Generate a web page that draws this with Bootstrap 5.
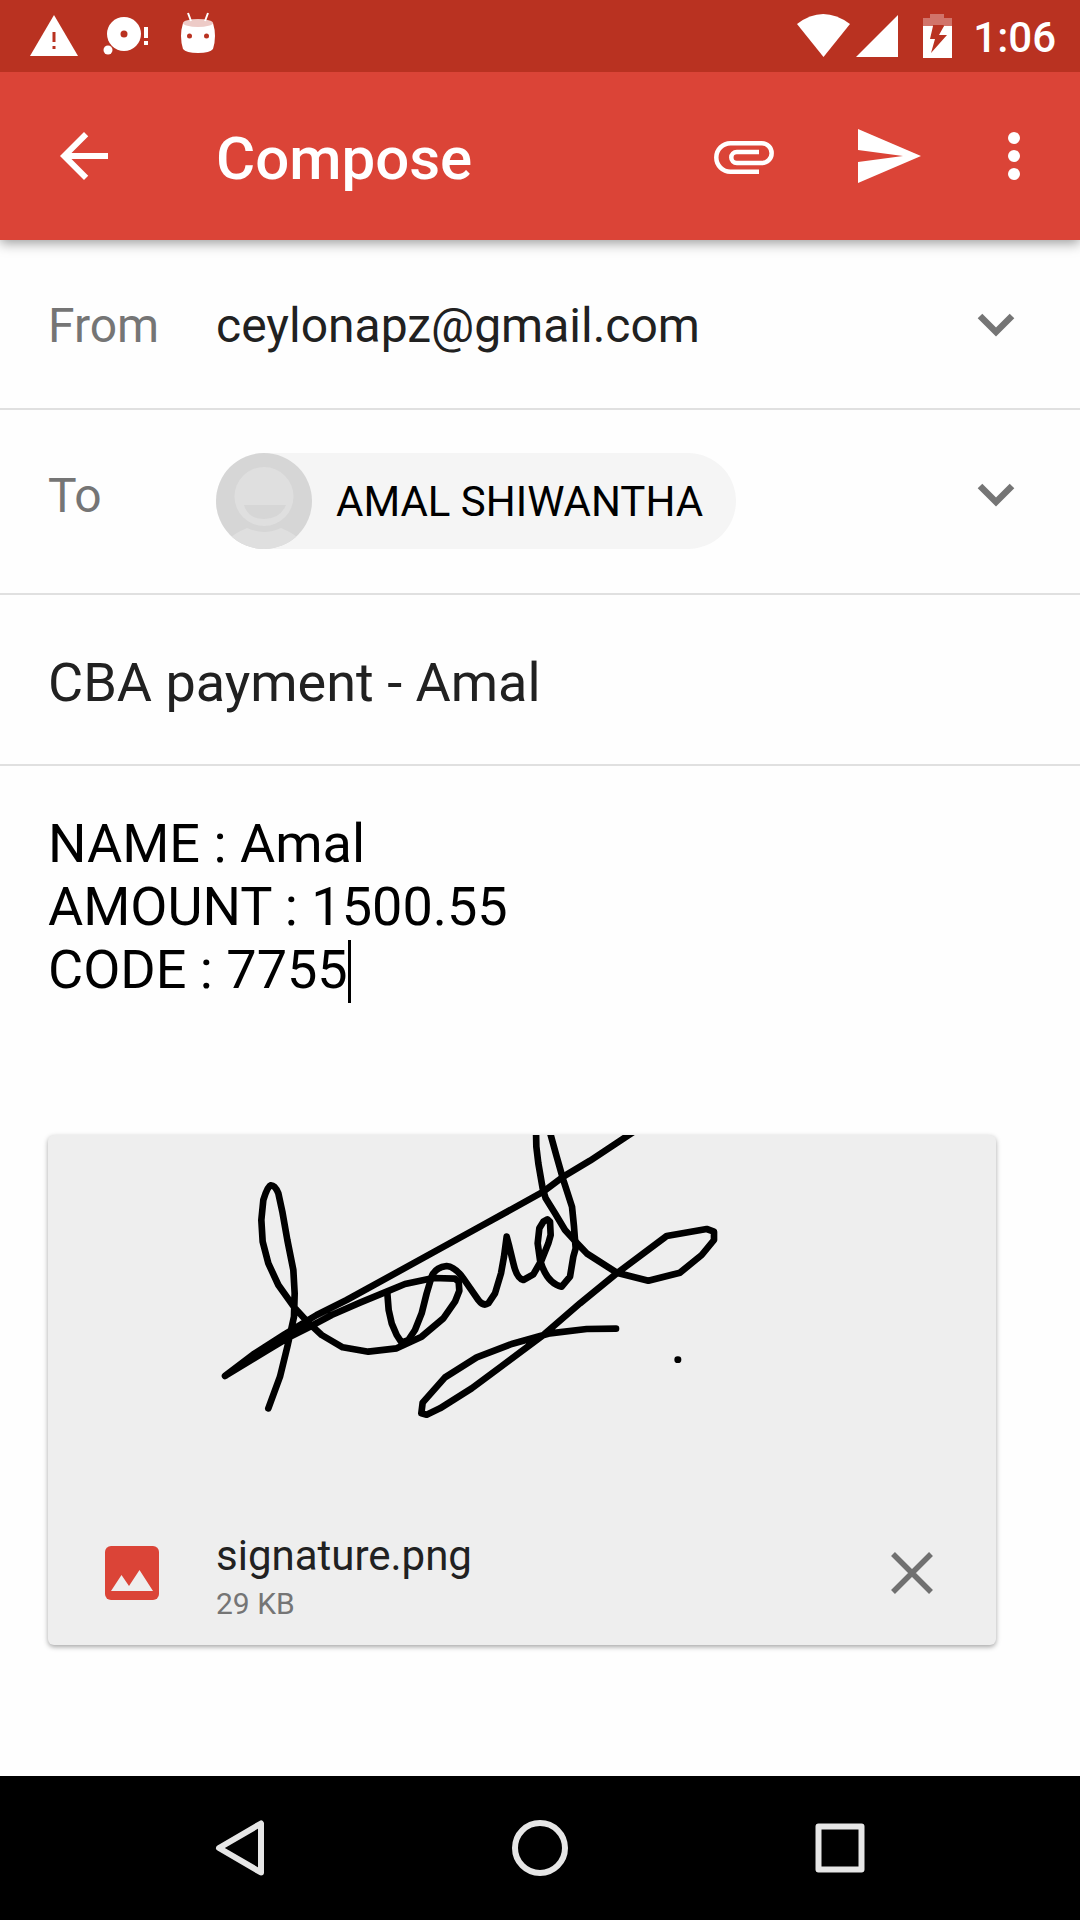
<!DOCTYPE html>
<html lang="en">
<head>
<meta charset="utf-8">
<meta name="viewport" content="width=device-width, initial-scale=1">
<title>Compose</title>
<link href="https://cdn.jsdelivr.net/npm/bootstrap@5.3.0/dist/css/bootstrap.min.css" rel="stylesheet">
<style>
  body { font-family: Roboto, "Noto Sans", sans-serif; color: #212121; background: #fefefe; }
  svg { display: block; flex: none; }
  button.plain { border: 0; background: none; padding: 0; color: inherit; }
  .status-bar { height: 72px; background: #b93221; padding: 0 24px 0 30px; z-index: 2; }
  .clock { font-size: 42px; line-height: 48px; font-weight: 500; margin-left: 21px; padding-top: 3px; }
  .app-bar { height: 168px; background: #db4437; padding: 0 12px 0 48px; box-shadow: 0 3px 12px rgba(0,0,0,.4); z-index: 1; }
  .app-title { font-size: 60px; line-height: 72px; font-weight: 500; padding-top: 5px; }
  .lead-col { width: 168px; flex: none; }
  .tool { width: 144px; height: 144px; }
  .tool-menu { width: 108px; }
  .field-row { padding: 43px 48px 39px; border-bottom: 2px solid #e0e0e0; }
  .to-row { padding-bottom: 44px; }
  .field-label { font-size: 48px; line-height: 86px; color: #757575; }
  .field-box { height: 86px; line-height: 86px; border: 0; padding: 0; background: none; color: #212121; outline: 0; appearance: none; }
  .from-box { font-size: 48px; }
  .subject-row { padding: 45px 48px 38px; }
  .big-text { font-size: 54px; }
  .expander, button.expander { height: 84px; margin-right: 12px; color: #757575; }
  .from-expander { pointer-events: none; }
  .chip { height: 96px; background: #f5f5f5; padding-right: 33px; gap: 24px; font-size: 42px; color: #000; }
  .message-area { padding: 46px 48px 0; }
  .message-box { height: 189px; line-height: 63px; padding: 0; border: 0; color: #000; background: none; resize: none; outline: 0; overflow: hidden; caret-color: transparent; }
  .cursor-bar { width: 3px; height: 63px; left: 300px; bottom: -2px; background: #000; }
  .attachment { margin: 134px 84px 96px 48px; background: #eee; border-radius: 6px; box-shadow: 0 2px 5px rgba(0,0,0,.35); }
  .preview { width: 100%; height: 366px; border-radius: 6px 6px 0 0; }
  .attachment-info { height: 144px; padding: 0 48px 0 57px; }
  .file-icon { width: 111px; flex: none; }
  .file-text { padding-top: 6px; }
  .file-name { font-size: 42px; line-height: 51px; margin-bottom: 3px; }
  .file-size { font-size: 30px; line-height: 39px; color: #757575; }
  .nav-keys { height: 144px; background: #000; }
  .nav-key { width: 300px; height: 144px; }
</style>
<script src="https://cdn.jsdelivr.net/npm/bootstrap@5.3.0/dist/js/bootstrap.bundle.min.js" defer></script>
</head>
<body class="min-vh-100 d-flex flex-column">

<div class="status-bar d-flex align-items-center text-white position-relative">
  <svg width="190" height="72" viewBox="30 0 190 72" fill="#fff" aria-hidden="true">
    <path d="M54 15L78 56H30z"/>
    <path fill="#b93221" d="M52.500 32h3v10h-3zM52.500 46h3v3h-3z"/>
    <circle cx="124" cy="34" r="17"/><circle cx="124" cy="34" r="3.500" fill="#b93221"/>
    <circle cx="108" cy="50" r="4.500"/>
    <path d="M144 27h4v11h-4zM144 41h4v4h-4z"/>
    <path d="M183 23Q198 28 213 23Q217 36 213 49Q210 53 198 53Q186 53 183 49Q179 36 183 23z"/>
    <ellipse cx="198" cy="23" rx="15" ry="4" fill="#edcbc7"/>
    <path d="M188 13l3 8M208 13l-3 8" stroke="#fff" stroke-width="2"/>
    <circle cx="189.500" cy="36" r="2.500" fill="#b93221"/><circle cx="206.500" cy="36" r="2.500" fill="#b93221"/>
  </svg>
  <div class="ms-auto d-flex align-items-center">
    <svg width="155" height="72" viewBox="797 0 155 72" fill="#fff" aria-hidden="true">
      <path d="M797 24Q823 4 850 24L823.500 57z"/>
      <path d="M898 15V57H856z"/>
      <path fill="#d1746a" d="M923 26V18h7v-4h14v4h8v8z"/>
      <path fill-rule="evenodd" d="M923 26h29v32h-29zM933 26l-3 13h5l-4 14 16-18h-8l5-9z"/>
      <path fill="#b93221" d="M933 25h11l-1 2h-10z"/>
    </svg>
    <span class="clock">1:06</span>
  </div>
</div>

<header class="app-bar d-flex align-items-center text-white position-relative">
  <div class="lead-col">
    <button class="plain d-block" type="button" aria-label="Back">
      <svg width="72" height="72" viewBox="0 0 24 24" fill="currentColor"><path d="M20 11H7.830l5.590-5.590L12 4l-8 8 8 8 1.410-1.410L7.830 13H20z"/></svg>
    </button>
  </div>
  <h1 class="app-title mb-0">Compose</h1>
  <div class="ms-auto d-flex align-items-center">
    <button class="plain tool d-flex align-items-center justify-content-center" type="button" aria-label="Attach file">
      <svg width="72" height="72" viewBox="0 0 72 72" fill="none" stroke="currentColor" stroke-width="4.500"><path d="M51 51.700H22.500A14.200 14.200 0 0 1 22.500 23.300H53.800A9.850 9.850 0 0 1 53.800 43H28.800A5.500 5.500 0 0 1 28.800 32H51"/></svg>
    </button>
    <button class="plain tool d-flex align-items-center justify-content-center" type="button" aria-label="Send">
      <svg width="72" height="72" viewBox="0 0 24 24" fill="currentColor"><path d="M2 21L23 12 2 3V10L17 12 2 14z"/></svg>
    </button>
    <button class="plain tool tool-menu d-flex align-items-center justify-content-center" type="button" aria-label="More options">
      <svg width="72" height="72" viewBox="0 0 24 24" fill="currentColor"><circle cx="12" cy="6" r="2"/><circle cx="12" cy="12" r="2"/><circle cx="12" cy="18" r="2"/></svg>
    </button>
  </div>
</header>

<main class="flex-grow-1">
  <div class="field-row d-flex align-items-start">
    <label class="field-label lead-col" for="from">From</label>
    <select class="field-box from-box flex-grow-1" id="from"><option>ceylonapz@gmail.com</option></select>
    <span class="expander from-expander d-flex align-items-center">
      <svg width="48" height="48" viewBox="0 0 48 48" fill="none" stroke="currentColor" stroke-width="6.500" aria-hidden="true"><path d="M8 15L24 31 40 15"/></svg>
    </span>
  </div>

  <div class="field-row to-row d-flex align-items-start">
    <span class="field-label lead-col">To</span>
    <div class="chip d-flex align-items-center rounded-pill">
      <svg width="96" height="96" viewBox="0 0 96 96" aria-hidden="true">
        <clipPath id="round"><circle cx="48" cy="48" r="48"/></clipPath>
        <g clip-path="url(#round)">
          <path fill="#d6d6d6" d="M0 0h96v96H0z"/>
          <path fill="#dfdfdf" d="M8 90Q18 80 31 75Q48 83 65 75Q78 80 88 90V96H8z"/>
          <ellipse cx="48" cy="43.500" rx="29.500" ry="29.500" fill="#dfdfdf"/>
          <path fill="#d6d6d6" d="M28 52H70Q64 66 48 66T28 52z"/>
        </g>
      </svg>
      <span>AMAL SHIWANTHA</span>
    </div>
    <button class="plain expander ms-auto d-flex align-items-center" type="button" aria-label="Show Cc and Bcc">
      <svg width="48" height="48" viewBox="0 0 48 48" fill="none" stroke="currentColor" stroke-width="6.500"><path d="M8 15L24 31 40 15"/></svg>
    </button>
  </div>

  <div class="field-row subject-row">
    <input class="field-box big-text w-100 d-block" type="text" aria-label="Subject" value="CBA payment - Amal">
  </div>

  <div class="message-area">
    <div class="position-relative">
      <textarea class="message-box big-text w-100 d-block" aria-label="Compose email" spellcheck="false">NAME : Amal
AMOUNT : 1500.55
CODE : 7755</textarea>
      <span class="cursor-bar position-absolute"></span>
    </div>
  </div>

  <section class="attachment" aria-label="Attachment">
    <svg class="preview" viewBox="0 0 2844 1098" preserveAspectRatio="xMidYMid slice" role="img" aria-label="Signature">
      <g transform="translate(456 -45)" fill="none" stroke="#000" stroke-width="20" stroke-linecap="round" stroke-linejoin="round">
        <path d="M205 865L240 770 262 680 282 590 284 520 280 450 262 360 247 275 235 220Q225 195 212 196Q203 198 190 240L184 300 188 365 205 430 235 495 285 565 325 608 365 645 428 682 505 695 590 685 665 650 730 595 765 545 778 512 776 485 765 476 700 474 615 492 560 515 480 548 395 585 330 620 270 650 200 692 75 768 160 703 255 642 350 585 440 540 840 320 1030 215 1090 170 1170 122 1300 36"/>
        <path d="M562 520L566 570 575 610 590 645 605 668 625 660 645 630 665 580 680 520 695 470Q705 442 740 438Q765 440 790 475L835 540Q850 560 865 550L885 520 903 460 912 410 920 350 928 380 940 430Q950 475 970 480L1000 463 1025 420 1045 370 1052 345 1050 305 1042 298 1030 305 1018 325 1013 370 1020 420Q1040 490 1085 500L1110 470 1120 410 1127 385 1122 320 1116 260 1090 180 1070 110 1048 30"/>
        <path d="M1008 30L1009 80 1015 130 1028 205 1037 235 1065 280 1095 330 1130 368 1160 400 1250 458 1345 482 1440 458 1505 405 1542 360 1542 335 1520 327 1400 348 1250 460 1140 550 1030 645 900 742 815 805 720 865 680 884 664 880 668 848 735 772 830 712 935 672 1050 640 1160 627 1248 626"/>
        <path d="M1433 719h1"/>
      </g>
    </svg>
    <div class="attachment-info d-flex align-items-center">
      <div class="file-icon">
        <svg width="54" height="54" viewBox="0 0 54 54" aria-hidden="true"><rect width="54" height="54" rx="6" fill="#db4437"/><path fill="#eee" d="M6 45L16.500 29 24 40 34.500 24 48 45z"/></svg>
      </div>
      <div class="file-text">
        <div class="file-name">signature.png</div>
        <div class="file-size">29 KB</div>
      </div>
      <button class="plain ms-auto" type="button" aria-label="Remove attachment">
        <svg width="72" height="72" viewBox="0 0 72 72" fill="none" stroke="#707070" stroke-width="5.500"><path d="M17 17L55 55M55 17L17 55"/></svg>
      </button>
    </div>
  </section>
</main>

<nav class="nav-keys d-flex justify-content-center" aria-label="System navigation">
  <button class="plain nav-key d-flex align-items-center justify-content-center" type="button" aria-label="Back">
    <svg width="72" height="72" viewBox="0 0 72 72" fill="none" stroke="#e6e6e6" stroke-width="6" stroke-linejoin="round"><path d="M57 11.500V60.500L15 36z"/></svg>
  </button>
  <button class="plain nav-key d-flex align-items-center justify-content-center" type="button" aria-label="Home">
    <svg width="72" height="72" viewBox="0 0 72 72" fill="none" stroke="#e6e6e6" stroke-width="6"><circle cx="36" cy="36" r="25"/></svg>
  </button>
  <button class="plain nav-key d-flex align-items-center justify-content-center" type="button" aria-label="Recent apps">
    <svg width="72" height="72" viewBox="0 0 72 72" fill="none" stroke="#e6e6e6" stroke-width="6" stroke-linejoin="round"><path d="M14.500 14.500h43v43h-43z"/></svg>
  </button>
</nav>
</body>
</html>
